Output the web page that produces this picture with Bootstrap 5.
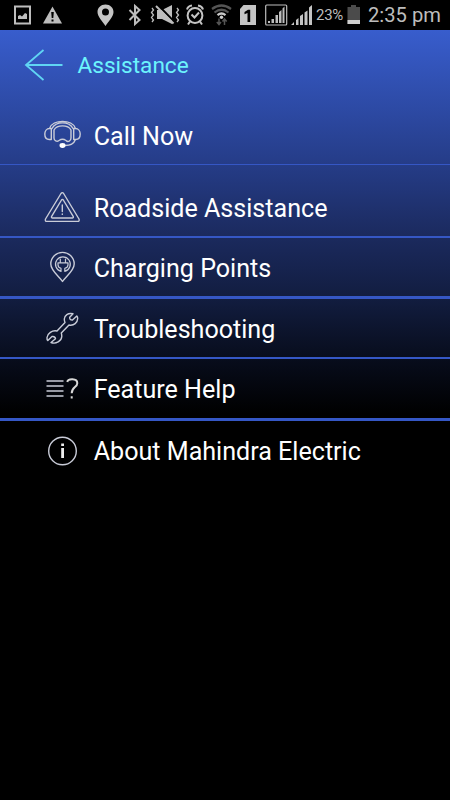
<!DOCTYPE html>
<html lang="en">
<head>
<meta charset="utf-8">
<meta name="viewport" content="width=device-width, initial-scale=1">
<title>Assistance</title>
<link href="https://cdn.jsdelivr.net/npm/bootstrap@5.3.0/dist/css/bootstrap.min.css" rel="stylesheet">
<style>
body{font-family:Roboto,sans-serif;background:#000;overflow:hidden}
svg{display:block;flex:none}
.status{height:30px;background:#000;color:#bdbdbd}
.status .pct{font-size:15px;width:31px;line-height:31px;letter-spacing:-.3px}
.status .clock{font-size:20.2px;line-height:31px;padding-left:6px}
.screen{height:770px;background:linear-gradient(#385dcd 0,#253c87 135px,#1b2a5e 206px,#121d40 268px,#080d1d 327px,#000 384px)}
.topbar{height:75px;color:#6cf4fd;padding-left:20px}
.topbar h1{font-size:22.6px;line-height:30px;padding-left:8.500px;margin:0 0 4px}
.topbar svg{margin-bottom:6px}
.menu-row{height:61px;padding-left:44px;border-bottom:2px solid #3557c5;font-size:25.1px;line-height:30px;color:#fff;text-decoration:none}
.menu-row span{padding:2px 0 0 12.700px}
.r-call{height:60px;border-bottom-width:1px}
.r-call span{padding-top:4px}
.r-road{height:73px;padding-top:14px}
.r-thick{border-bottom-width:3px}
.r-charge span{padding-top:4px}
.r-trouble{height:60px}
.r-trouble span{padding-top:3px}
.r-feature{height:62px}
.r-feature span{padding-top:3px}
.r-about span{padding-top:1px}
.ico{fill:none;stroke:#c9ccd8;stroke-width:1.400;stroke-linejoin:round;stroke-linecap:round}
</style>
<script src="https://cdn.jsdelivr.net/npm/bootstrap@5.3.0/dist/js/bootstrap.bundle.min.js"></script>
</head>
<body>
<div class="status d-flex">
  <svg width="38" height="30" viewBox="0 0 38 30"><rect x="15" y="6.500" width="15" height="17" fill="none" stroke="#bdbdbd" stroke-width="2"/><path d="M18 19v-3l2-1 2 1.500 3-3.500 2 1v5z" fill="#bdbdbd"/></svg>
  <svg width="32" height="30" viewBox="38 0 32 30"><path d="M52.500 6.500 62 23.500H43z" fill="#bdbdbd"/><path d="M51.200 12h2.600l-.5 6h-1.600zM51.500 19.500h2v2h-2z" fill="#000"/></svg>
  <svg width="50" height="30" viewBox="70 0 50 30"><path fill-rule="evenodd" d="M105.500 4.500c-4.600 0-8 3.300-8 7.500 0 5 5 9 8 14 3-5 8-9 8-14 0-4.200-3.400-7.500-8-7.500zm0 4a3.500 3.500 0 1 1 0 7 3.500 3.500 0 0 1 0-7z" fill="#c4c4c4"/></svg>
  <svg width="28" height="30" viewBox="120 0 28 30"><path d="m129.500 10 10 10-4.500 4V6l4.500 4-10 10" fill="none" stroke="#bdbdbd" stroke-width="2"/></svg>
  <svg width="34" height="30" viewBox="148 0 34 30"><path d="M157 10h5l10-5v19l-10-5h-5z" fill="#bdbdbd"/><path d="m157.500 4.500 16.500 17" stroke="#000" stroke-width="2"/><path d="m156 6 17.500 17.500" stroke="#bdbdbd" stroke-width="2"/><path d="m152 8 1.500 2-2 2.500 2 2.500-2 2.500 2 2.500-1.500 2M177 8l1.500 2-2 2.500 2 2.500-2 2.500 2 2.500-1.500 2" fill="none" stroke="#bdbdbd" stroke-width="1.300"/></svg>
  <svg width="27" height="30" viewBox="182 0 27 30"><g fill="none" stroke="#c4c4c4" stroke-width="2"><circle cx="195" cy="15.500" r="7.400"/><path d="m191.500 14.500 3 3 4.500-5M190 21.500l-2 3M200 21.500l2 3M187 9.500q1-3.500 5-4M203 9.500q-1-3.500-5-4"/></g></svg>
  <svg width="26" height="30" viewBox="209 0 26 30"><g fill="none" stroke-width="2.200"><path d="M212 9q9.500-7 19 0M214.500 12.500q7-5.500 14 0" stroke="#555"/><path d="M217.500 15.200q4-3.400 8 0" stroke="#c9c9c9"/></g><circle cx="221.500" cy="17.200" r="1.700" fill="#d0d0d0"/><path d="M219 18.500v6m-2.200-2.500 2.200 2.500 2-2.500M224.500 25v-6m-2 2.500 2-2.500 2.200 2.500" fill="none" stroke="#555" stroke-width="1.500"/></svg>
  <svg width="27" height="30" viewBox="235 0 27 30"><path d="M243.500 5H256v20h-16V9z" fill="#c4c4c4"/><path d="m244.500 12 3.500-2.200h2.200V22h-2.700v-9l-3 1.300z" fill="#000"/></svg>
  <svg width="27" height="30" viewBox="262 0 27 30"><rect x="265.700" y="5" width="21" height="20" rx="1" fill="none" stroke="#bdbdbd" stroke-width="1.200"/><path d="M268 23v-2h2v2zM271.500 23v-4h2.500v4zM275.500 23v-8h2.500v8zM279 23V12l2.500-2v13zM282.500 23V8.500l2-2V23z" fill="#bdbdbd"/></svg>
  <svg width="27" height="30" viewBox="289 0 27 30"><path d="m291 25 3-3v3zM296 25v-5l2.500-2v7zM300 25v-9l3-2v11zM304.500 25V12.500l3-2V25zM309 25V7.500l3-2.500v20z" fill="#c4c4c4"/></svg>
  <span class="pct">23%</span>
  <svg width="15" height="30" viewBox="347 0 15 30"><path d="M347.500 7h3.500V5h5v2h4v17h-12.500z" fill="#4b4b4b"/><path d="M347.500 20H360v4h-12.500z" fill="#cfcfcf"/></svg>
  <span class="clock text-nowrap">2:35 pm</span>
</div>
<main class="screen">
  <header class="topbar d-flex align-items-center">
    <svg width="49" height="36" viewBox="20 46 49 36"><path d="M62.500 64H26m17.500-15L26 64l17.500 15" fill="none" stroke="#60d5f3" stroke-width="1.800"/></svg>
    <h1 class="fw-normal">Assistance</h1>
  </header>
  <nav class="d-flex flex-column">
    <a href="#" class="menu-row r-call d-flex align-items-center">
      <svg class="ico" width="37" height="36" viewBox="44 117 37 36"><path d="M49.500 128.500h1.800v11h-2c-3 0-4.500-2.500-4.500-5.500s2-5.500 4.700-5.500zM75.500 128.500h-1.800v11h2c3 0 4.500-2.500 4.500-5.500s-2-5.500-4.700-5.500zM49.500 128.500c3-9.500 23-9.500 26 0M52 128.500c4-7.500 17-7.500 21 0M75.500 139.500c-1.500 4-5 6-10.500 6"/><path d="M54 138v-8c3-5.500 14-5.500 17 0v8c0 3-3 4.500-5 2.500-2-1.500-5-1.500-7 0s-5 .500-5-2.500z"/><ellipse cx="62.500" cy="145.500" rx="2.300" ry="1.700" fill="#fff" stroke="#fff"/></svg>
      <span>Call Now</span></a>
    <a href="#" class="menu-row r-road d-flex align-items-center">
      <svg class="ico" width="37" height="36" viewBox="44 190 37 36"><path d="M61 193.500q1.300-1.800 2.600 0L79 219q.8 2.400-1.500 2.400h-30.500q-2.300 0-1.500-2.400z"/><path d="M61.500 200q.9-1.200 1.800 0l10 16.700q.3 1.300-1 1.300h-19.800q-1.300 0-1-1.300zM62.300 205v6.500m0 2.400v.5"/></svg>
      <span>Roadside Assistance</span></a>
    <a href="#" class="menu-row r-thick r-charge d-flex align-items-center">
      <svg class="ico" width="37" height="36" viewBox="44 249 37 36"><path d="M62.500 281.500c-3-5-11.700-10.500-11.700-17.500 0-6.600 5.200-11.600 11.700-11.600S74.200 257.400 74.200 264c0 7-8.700 12.500-11.700 17.500z"/><path d="M61 271.400a7.400 7.400 0 1 1 3.800 0v-3c2-.5 3.200-1.500 3.200-3.600v-2H58v2c0 2.100 1.200 3.100 3 3.600zM60.300 259v3.500m5.200-3.500v3.500" stroke-width="1.200"/></svg>
      <span>Charging Points</span></a>
    <a href="#" class="menu-row r-trouble d-flex align-items-center">
      <svg class="ico" width="37" height="36" viewBox="44 310 37 36"><path d="M73 313.800C68 312.500 64.500 315.500 64.300 319q0 2 .7 3.500L57 331c-5-1-9.500 2.500-10 6.500q-.2 2 .8 3L52 336.500q3-.5 3.500 2.200L51 342.500c5 2 10.500-1.500 10.800-6q0-2-.5-3.500L69 325c5 1 8.500-2.500 8.700-6.500q0-1.500-.9-2.500L72.500 320q-3 .2-2.800-2.800z"/></svg>
      <span>Troubleshooting</span></a>
    <a href="#" class="menu-row r-thick r-feature d-flex align-items-center">
      <svg class="ico" width="37" height="36" viewBox="44 370.500 37 36"><path d="M46.500 380.500h17m-17 5h17m-17 5h17m-17 5h17" stroke-linecap="butt"/><path d="M67.300 381.500c.5-3.600 10-4 10 1.200 0 4-5.600 4-5.600 10m0 3v2.300" stroke-width="2" stroke="#d8d8d8" stroke-linecap="butt"/></svg>
      <span>Feature Help</span></a>
    <a href="#" class="menu-row r-about border-0 d-flex align-items-center">
      <svg class="ico" width="37" height="36" viewBox="44 432.500 37 36"><circle cx="62.500" cy="449.500" r="13.800"/><path d="M62.600 446.500v10m0-14.500v2.500" stroke="#eee" stroke-width="2.800" stroke-linecap="butt"/></svg>
      <span>About Mahindra Electric</span></a>
  </nav>
</main>
</body>
</html>
